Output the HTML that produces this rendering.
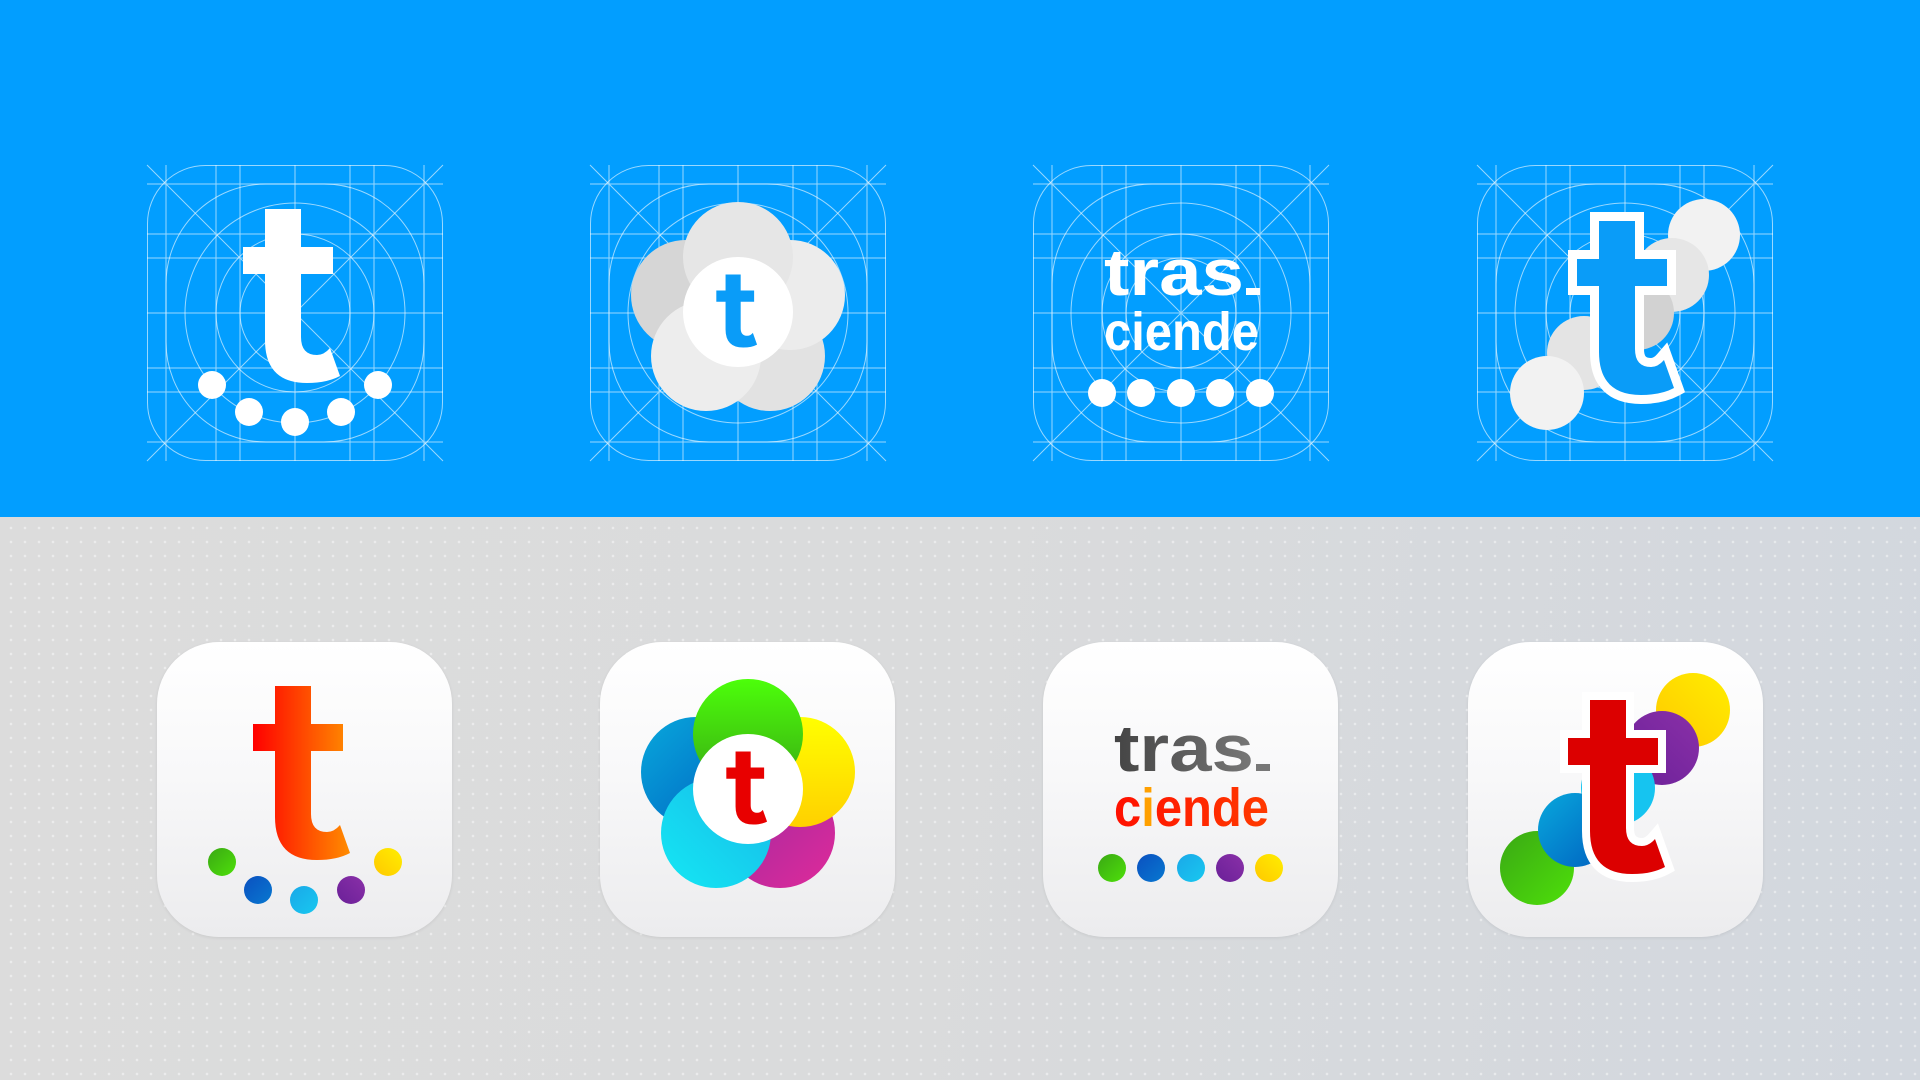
<!DOCTYPE html>
<html><head><meta charset="utf-8"><style>
html,body{margin:0;padding:0;width:1920px;height:1080px;overflow:hidden}
body{position:relative;background:linear-gradient(100deg,#dcdcdc 0%,#dadbdc 50%,#d2d7de 100%)}
.top{position:absolute;left:0;top:0;width:1920px;height:517px;background:#029eff}
.dots{position:absolute;left:0;top:517px;width:1920px;height:563px;background-image:radial-gradient(circle,rgba(255,255,255,.45) 1px,transparent 1.6px);background-size:14px 14px;background-position:4px 4px}
svg{position:absolute;overflow:visible}
.tile{position:absolute;width:295px;height:295px;border-radius:62px;background:linear-gradient(#ffffff 0%,#f8f8f9 45%,#ececee 100%);box-shadow:0 1px 3px rgba(0,0,0,.08)}
</style></head><body>
<div class="top"></div>
<div class="dots"></div>

<svg width="0" height="0" style="position:absolute">
<defs>
<g id="grid" fill="none" stroke="#ffffff" stroke-opacity=".6" stroke-width="1">
<rect x="0.5" y="0.5" width="295" height="295" rx="58"/>
<rect x="19" y="19" width="258" height="258" rx="100"/>
<circle cx="148" cy="148" r="110"/><circle cx="148" cy="148" r="79"/><circle cx="148" cy="148" r="55"/>
<path d="M19 0V296M69 0V296M93 0V296M148 0V296M203 0V296M227 0V296M277 0V296M0 19H296M0 69H296M0 93H296M0 148H296M0 203H296M0 227H296M0 277H296M0 0L296 296M296 0L0 296"/>
</g>
<path id="tt" d="M118,44 H154 V82 H186 V109 H154 V172 Q154,190 170,190 Q177,190 183,183 L193,211 Q180,218 160,218 Q118,218 118,175 V109 H96 V82 H118 Z"/>
<linearGradient id="ro" x1="0" x2="1"><stop offset="0" stop-color="#ff0000"/><stop offset="1" stop-color="#ff8c00"/></linearGradient>
<linearGradient id="rr" x1="0" x2="1"><stop offset="0" stop-color="#ff1000"/><stop offset="1" stop-color="#ff3a00"/></linearGradient>
<linearGradient id="gr" x1="0" y1="0" x2="1" y2="1"><stop offset="0" stop-color="#3aa814"/><stop offset="1" stop-color="#4ee00a"/></linearGradient>
<linearGradient id="gr2" x1="0" y1="1" x2="0" y2="0"><stop offset="0" stop-color="#3aa814"/><stop offset="1" stop-color="#4cff0a"/></linearGradient>
<linearGradient id="bl" x1="0" y1="0" x2="1" y2="1"><stop offset="0" stop-color="#0a50c0"/><stop offset="1" stop-color="#0878d0"/></linearGradient>
<linearGradient id="bl2" x1="1" y1="1" x2="0" y2="0"><stop offset="0" stop-color="#0060c0"/><stop offset="1" stop-color="#08a8dc"/></linearGradient>
<linearGradient id="cy" x1="0" y1="0" x2="1" y2="1"><stop offset="0" stop-color="#1aa8e8"/><stop offset="1" stop-color="#18c8f0"/></linearGradient>
<linearGradient id="cy2" x1="0" y1="1" x2="1" y2="0"><stop offset="0" stop-color="#14e8f4"/><stop offset="1" stop-color="#18b8e8"/></linearGradient>
<linearGradient id="pu" x1="0" y1="1" x2="1" y2="0"><stop offset="0" stop-color="#6a2098"/><stop offset="1" stop-color="#8a30a8"/></linearGradient>
<linearGradient id="mg" x1="0" y1="0" x2="1" y2="1"><stop offset="0" stop-color="#9a2aa0"/><stop offset="1" stop-color="#e02a9a"/></linearGradient>
<linearGradient id="ye" x1="0" y1="1" x2="1" y2="0"><stop offset="0" stop-color="#ffc800"/><stop offset="1" stop-color="#ffee00"/></linearGradient>
<linearGradient id="ye2" x1="0" y1="1" x2="0" y2="0"><stop offset="0" stop-color="#ffd000"/><stop offset="1" stop-color="#ffff00"/></linearGradient>
<linearGradient id="gy" x1="0" y1="0" x2="1" y2="0"><stop offset="0" stop-color="#444"/><stop offset="1" stop-color="#777"/></linearGradient>
</defs>
</svg>

<!-- TOP ROW -->
<svg style="left:147px;top:165px" width="296" height="296" viewBox="0 0 296 296">
<use href="#grid"/>
<use href="#tt" fill="#fff"/>
<g fill="#fff"><circle cx="65" cy="220" r="14"/><circle cx="102" cy="247" r="14"/><circle cx="148" cy="257" r="14"/><circle cx="194" cy="247" r="14"/><circle cx="231" cy="220" r="14"/></g>
</svg>

<svg style="left:590px;top:165px" width="296" height="296" viewBox="0 0 296 296">
<use href="#grid"/>
<circle cx="180" cy="191" r="55" fill="#e2e2e2"/>
<circle cx="200" cy="130" r="55" fill="#ececec"/>
<circle cx="96" cy="130" r="55" fill="#d6d6d6"/>
<circle cx="116" cy="191" r="55" fill="#ededed"/>
<circle cx="148" cy="92" r="55" fill="#e6e6e6"/>
<circle cx="148" cy="147" r="55" fill="#fff"/>
<use href="#tt" fill="#0a9cf8" transform="translate(86,91) scale(0.42)"/>
</svg>

<svg style="left:1033px;top:165px" width="296" height="296" viewBox="0 0 296 296">
<use href="#grid"/>
<g fill="#fff" font-family="Liberation Sans, sans-serif" font-weight="bold">
<text x="71" y="130" font-size="66" textLength="140" lengthAdjust="spacingAndGlyphs">tras</text>
<rect x="213" y="123" width="14" height="7"/>
<text x="71" y="185" font-size="54" textLength="155" lengthAdjust="spacingAndGlyphs">ciende</text>
<circle cx="69" cy="228" r="14"/><circle cx="108" cy="228" r="14"/><circle cx="148" cy="228" r="14"/><circle cx="187" cy="228" r="14"/><circle cx="227" cy="228" r="14"/>
</g>
</svg>

<svg style="left:1477px;top:165px" width="296" height="296" viewBox="0 0 296 296">
<use href="#grid"/>
<circle cx="227" cy="70" r="36" fill="#f2f2f2"/>
<circle cx="195" cy="110" r="37" fill="#e6e6e6"/>
<circle cx="160" cy="148" r="37" fill="#d2d2d2"/>
<circle cx="107" cy="188" r="37" fill="#e4e4e4"/>
<circle cx="70" cy="228" r="37" fill="#f2f2f2"/>
<use href="#tt" fill="#0a9cf8" stroke="#fff" stroke-width="18" stroke-linejoin="miter" paint-order="stroke" transform="translate(4,12)"/>
</svg>

<!-- BOTTOM ROW -->
<div class="tile" style="left:157px;top:642px"></div>
<svg style="left:157px;top:642px" width="296" height="296" viewBox="0 0 296 296">
<use href="#tt" fill="url(#ro)"/>
<circle cx="65" cy="220" r="14" fill="url(#gr)"/>
<circle cx="101" cy="248" r="14" fill="url(#bl)"/>
<circle cx="147" cy="258" r="14" fill="url(#cy)"/>
<circle cx="194" cy="248" r="14" fill="url(#pu)"/>
<circle cx="231" cy="220" r="14" fill="url(#ye)"/>
</svg>

<div class="tile" style="left:600px;top:642px"></div>
<svg style="left:600px;top:642px" width="296" height="296" viewBox="0 0 296 296">
<circle cx="180" cy="191" r="55" fill="url(#mg)"/>
<circle cx="200" cy="130" r="55" fill="url(#ye2)"/>
<circle cx="96" cy="130" r="55" fill="url(#bl2)"/>
<circle cx="116" cy="191" r="55" fill="url(#cy2)"/>
<circle cx="148" cy="92" r="55" fill="url(#gr2)"/>
<circle cx="148" cy="147" r="55" fill="#fff"/>
<use href="#tt" fill="#e80000" transform="translate(86,91) scale(0.42)"/>
</svg>

<div class="tile" style="left:1043px;top:642px"></div>
<svg style="left:1043px;top:642px" width="296" height="296" viewBox="0 0 296 296">
<g font-family="Liberation Sans, sans-serif" font-weight="bold">
<text x="71" y="129" font-size="66" fill="url(#gy)" textLength="140" lengthAdjust="spacingAndGlyphs">tras</text>
<rect x="213" y="122" width="14" height="7" fill="#777"/>
<text x="71" y="184" font-size="54" fill="url(#rr)" textLength="155" lengthAdjust="spacingAndGlyphs">c<tspan fill="#ffa000">i</tspan>ende</text>
</g>
<circle cx="69" cy="226" r="14" fill="url(#gr)"/>
<circle cx="108" cy="226" r="14" fill="url(#bl)"/>
<circle cx="148" cy="226" r="14" fill="url(#cy)"/>
<circle cx="187" cy="226" r="14" fill="url(#pu)"/>
<circle cx="226" cy="226" r="14" fill="url(#ye)"/>
</svg>

<div class="tile" style="left:1468px;top:642px"></div>
<svg style="left:1468px;top:642px" width="296" height="296" viewBox="0 0 296 296">
<circle cx="225" cy="68" r="37" fill="url(#ye)"/>
<circle cx="194" cy="106" r="37" fill="url(#pu)"/>
<circle cx="150" cy="146" r="37" fill="#16c4f0"/>
<circle cx="69" cy="226" r="37" fill="url(#gr)"/>
<circle cx="107" cy="188" r="37" fill="url(#bl2)"/>
<use href="#tt" fill="#dc0000" stroke="#fff" stroke-width="16" stroke-linejoin="miter" paint-order="stroke" transform="translate(4,14)"/>
</svg>
</body></html>
